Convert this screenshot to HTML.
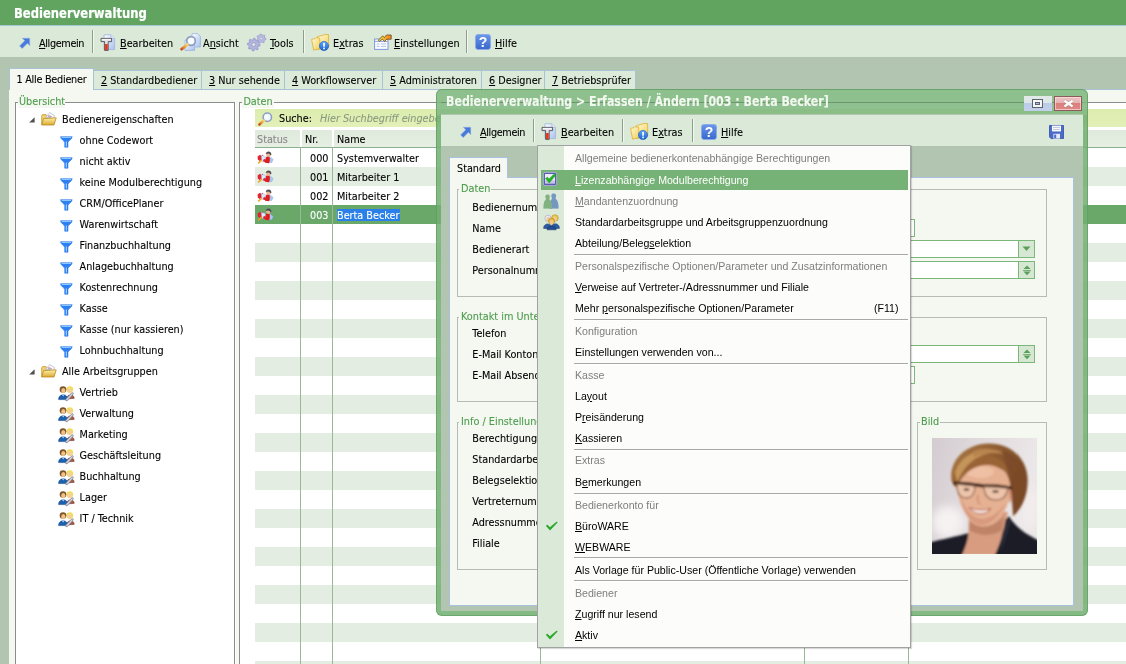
<!DOCTYPE html>
<html lang="de"><head><meta charset="utf-8"><title>Bedienerverwaltung</title>
<style>
html,body{margin:0;padding:0}
body{width:1126px;height:664px;overflow:hidden;position:relative;background:#f4f8f0;font-family:'DejaVu Sans Condensed','Liberation Sans',sans-serif;font-size:10.75px;color:#000}
#root{left:0;top:0;width:1126px;height:664px;overflow:hidden;will-change:transform}
div{position:absolute;box-sizing:border-box;white-space:nowrap}
svg{position:absolute;overflow:visible}
.t{line-height:14px;height:14px;-webkit-text-stroke:0.1px currentColor}
.g{color:#4c9c4c}
.m{font-family:'Liberation Sans',sans-serif;font-size:11.5px;line-height:14px;height:14px;transform:scaleX(.922);transform-origin:0 0}
.mg{color:#7e7e7e}
u{text-decoration:underline;text-underline-offset:1px}
.bold{font-weight:bold}
</style></head>
<body>
<div id="root">
<svg width="0" height="0" style="left:0;top:0"><defs><linearGradient id="gFold" x1="0" y1="0" x2="0" y2="1"><stop offset="0" stop-color="#fdf0a8"/><stop offset="1" stop-color="#dcaa34"/></linearGradient><linearGradient id="gFold2" x1="0" y1="0" x2="1" y2="1"><stop offset="0" stop-color="#fff8d4"/><stop offset="1" stop-color="#f2d058"/></linearGradient><linearGradient id="gHandle" x1="1" y1="0" x2="0" y2="1"><stop offset="0" stop-color="#f8d860"/><stop offset="0.6" stop-color="#e89030"/><stop offset="1" stop-color="#c05028"/></linearGradient><linearGradient id="gDoc" x1="0" y1="0" x2="1" y2="1"><stop offset="0" stop-color="#ffffff"/><stop offset="1" stop-color="#a8c0f0"/></linearGradient><linearGradient id="gHelp" x1="0" y1="0" x2="0" y2="1"><stop offset="0" stop-color="#6a96ea"/><stop offset="1" stop-color="#3868cc"/></linearGradient><linearGradient id="gBlue" x1="0" y1="0" x2="0" y2="1"><stop offset="0" stop-color="#58a8ff"/><stop offset="1" stop-color="#1c60d0"/></linearGradient><linearGradient id="gOr" x1="0" y1="0" x2="1" y2="0"><stop offset="0" stop-color="#f8e040"/><stop offset="1" stop-color="#f08020"/></linearGradient></defs></svg>
<div style="left:0px;top:0px;width:1126px;height:25px;background:#60a460"></div>
<div class="t" style="left:14px;top:4.6px;font-weight:bold;font-size:14.3px;transform:scaleX(.902);transform-origin:0 0;color:#fff;line-height:16px;height:16px;text-shadow:0 0 1px rgba(255,255,255,.35)">Bedienerverwaltung</div>
<div style="left:0px;top:25px;width:1126px;height:32px;background:#dbead8"></div>
<div style="left:0px;top:25px;width:1126px;height:1px;background:#a4c8d4"></div>
<div style="left:0px;top:57px;width:1126px;height:33px;background:#b1c5b1"></div>
<div style="left:0px;top:89px;width:9px;height:575px;background:#b1c5b1"></div>
<svg style="left:19px;top:37.4px" width="12" height="12" viewBox="0 0 12 12"><path d="M3.4 1.3 L10.7 1.3 L10.7 8.6 L8.4 6.3 L3.2 11.5 L0.6 8.9 L5.8 3.7 Z" fill="#4878d8" stroke="#88a8ec" stroke-width="0.6"/></svg>
<div class="t" style="left:39px;top:37px;letter-spacing:-0.35px"><u>A</u>llgemein</div>
<div style="left:92px;top:30px;width:1px;height:23px;background:#8e9e8e"></div>
<div style="left:93px;top:30px;width:1px;height:23px;background:#f2f8f0"></div>
<svg style="left:100px;top:34px" width="16" height="18" viewBox="0 0 16 18"><path d="M4 0.8 H11 L14.6 4.4 V15.6 H4 Z" fill="url(#gDoc)" stroke="#a4b8dc" stroke-width="0.9"/><path d="M11 0.8 V4.4 H14.6" fill="#e4ecfa" stroke="#a4b8dc" stroke-width="0.7"/><path d="M1 4.4 H11.6 V7.6 H8.2 V16.4 H4.6 V7.6 H1 Z" fill="#e4e4e8" stroke="#4c4c54" stroke-width="0.9"/><path d="M2 5.4 H10.6" stroke="#fff" stroke-width="0.8"/><rect x="5.1" y="10" width="2.6" height="6" fill="#e83410"/></svg>
<div class="t" style="left:120px;top:37px;"><u>B</u>earbeiten</div>
<svg style="left:180.2px;top:33px" width="21" height="18" viewBox="0 0 21 18"><path d="M12 0.6 H17.6 L20.4 3.4 V14 H12 Z" fill="url(#gDoc)" stroke="#9cb4e0" stroke-width="0.8"/><path d="M5 7 H12.4 L14.6 9.2 V17.4 H5 Z" fill="url(#gDoc)" stroke="#9cb4e0" stroke-width="0.8"/><path d="M14.5 5h4M14.5 7.2h4M14.5 9.4h4" stroke="#c8d8f4" stroke-width="0.8"/><circle cx="11" cy="8" r="4.3" fill="#fafdff" stroke="#8c9cc0" stroke-width="1.7"/><path d="M7.4 11.6 L1.6 16.2" stroke="url(#gHandle)" stroke-width="2.8" stroke-linecap="round"/></svg>
<div class="t" style="left:203px;top:37px;">A<u>n</u>sicht</div>
<svg style="left:247px;top:33.6px" width="20" height="18" viewBox="0 0 20 18"><polygon points="13.10,10.60 12.98,11.85 11.08,12.41 10.64,13.23 11.23,15.13 10.26,15.92 8.51,14.98 7.62,15.24 6.70,17.00 5.45,16.88 4.89,14.98 4.07,14.54 2.17,15.13 1.38,14.16 2.32,12.41 2.06,11.52 0.30,10.60 0.42,9.35 2.32,8.79 2.76,7.97 2.17,6.07 3.14,5.28 4.89,6.22 5.78,5.96 6.70,4.20 7.95,4.32 8.51,6.22 9.33,6.66 11.23,6.07 12.02,7.04 11.08,8.79 11.34,9.68" fill="#b4b4e0" stroke="#8c8cc4" stroke-width="0.7" stroke-linejoin="round"/><circle cx="6.7" cy="10.6" r="1.92" fill="#dcead9" stroke="#8c8cc4" stroke-width="0.6"/><polygon points="19.00,4.60 18.88,5.65 17.43,6.11 17.02,6.77 17.23,8.27 16.34,8.83 15.07,7.99 14.30,8.08 13.25,9.18 12.26,8.83 12.13,7.32 11.58,6.77 10.07,6.64 9.72,5.65 10.82,4.60 10.91,3.83 10.07,2.56 10.63,1.67 12.13,1.88 12.79,1.47 13.25,0.02 14.30,-0.10 15.07,1.21 15.81,1.47 17.23,0.93 17.97,1.67 17.43,3.09 17.69,3.83" fill="#bcbce4" stroke="#9494cc" stroke-width="0.7" stroke-linejoin="round"/><circle cx="14.3" cy="4.6" r="1.41" fill="#dcead9" stroke="#9494cc" stroke-width="0.6"/></svg>
<div class="t" style="left:270px;top:37px;"><u>T</u>ools</div>
<div style="left:303px;top:30px;width:1px;height:23px;background:#8e9e8e"></div>
<div style="left:304px;top:30px;width:1px;height:23px;background:#f2f8f0"></div>
<svg style="left:310.8px;top:33.6px" width="19" height="17" viewBox="0 0 19 17"><path d="M6.4 2.6 L12.2 1.2 L13 0.4 L17.6 0.6 L17.8 13 L7 15.4 Z" fill="url(#gFold2)" stroke="#dcae34" stroke-width="0.8" stroke-linejoin="round"/><path d="M0.6 5.4 L4 4.6 L4.8 3.8 L8.6 4 L9.2 14.6 L2.6 16.2 Z" fill="url(#gFold2)" stroke="#dcae34" stroke-width="0.8" stroke-linejoin="round"/><circle cx="13" cy="12" r="4.6" fill="url(#gBlue)" stroke="#1858c0" stroke-width="0.6"/><rect x="12.2" y="8.8" width="1.7" height="4" rx="0.5" fill="#fff"/><rect x="12.2" y="13.6" width="1.7" height="1.6" rx="0.5" fill="#fff"/></svg>
<div class="t" style="left:333px;top:37px;">E<u>x</u>tras</div>
<svg style="left:373.8px;top:33.8px" width="18" height="17" viewBox="0 0 18 17"><rect x="0.6" y="5" width="13.4" height="10.4" fill="#fbfcff" stroke="#7c98dc" stroke-width="1"/><path d="M0.6 7.4 H14" stroke="#88a4e4" stroke-width="1"/><path d="M2.6 10h3M7 10h5M2.6 12.4h3M7 12.4h5" stroke="#b0c0e8" stroke-width="1"/><path d="M4.4 6.2 L8.6 1.8 L10.4 3.6 L12.4 1 L17.2 1 L17.2 5.2 L12.6 5.2 L10.6 7.6 L8.4 5.2 L5.4 7.4 Z" fill="url(#gOr)" stroke="#5c3c10" stroke-width="0.7" stroke-linejoin="round"/></svg>
<div class="t" style="left:394px;top:37px;"><u>E</u>instellungen</div>
<div style="left:466px;top:30px;width:1px;height:23px;background:#8e9e8e"></div>
<div style="left:467px;top:30px;width:1px;height:23px;background:#f2f8f0"></div>
<svg style="left:474.6px;top:34.4px" width="16" height="16" viewBox="0 0 16 16"><rect x="0.5" y="0.5" width="15" height="15" rx="2.4" fill="url(#gHelp)" stroke="#8caaea" stroke-width="1"/><text x="8" y="13" text-anchor="middle" font-family="Liberation Sans,sans-serif" font-weight="bold" font-size="14" fill="#fff">?</text></svg>
<div class="t" style="left:495px;top:37px;"><u>H</u>ilfe</div>
<div style="left:93px;top:70px;width:109px;height:19px;background:#dcebd9;border:1px solid #a9c3d6;border-bottom:none"></div>
<div class="t" style="left:101px;top:74px;"><u>2</u> Standardbediener</div>
<div style="left:201px;top:70px;width:84px;height:19px;background:#dcebd9;border:1px solid #a9c3d6;border-bottom:none"></div>
<div class="t" style="left:209px;top:74px;"><u>3</u> Nur sehende</div>
<div style="left:284px;top:70px;width:99px;height:19px;background:#dcebd9;border:1px solid #a9c3d6;border-bottom:none"></div>
<div class="t" style="left:292px;top:74px;"><u>4</u> Workflowserver</div>
<div style="left:382px;top:70px;width:100px;height:19px;background:#dcebd9;border:1px solid #a9c3d6;border-bottom:none"></div>
<div class="t" style="left:390px;top:74px;"><u>5</u> Administratoren</div>
<div style="left:481px;top:70px;width:64px;height:19px;background:#dcebd9;border:1px solid #a9c3d6;border-bottom:none"></div>
<div class="t" style="left:489px;top:74px;"><u>6</u> Designer</div>
<div style="left:544px;top:70px;width:92px;height:19px;background:#dcebd9;border:1px solid #a9c3d6;border-bottom:none"></div>
<div class="t" style="left:552px;top:74px;"><u>7</u> Betriebsprüfer</div>
<div style="left:9px;top:89px;width:1117px;height:1px;background:#a9c3d6"></div>
<div style="left:9px;top:68px;width:85px;height:22px;background:#f4f8f0;border:1px solid #a9c3d6;border-bottom:none"></div>
<div class="t" style="left:16.5px;top:73px;letter-spacing:-0.25px">1 Alle Bediener</div>
<div style="left:15px;top:102px;width:220px;height:570px;border:1px solid #8c8c8c;background:#fff;box-shadow:1px 0 0 #fff, inset 1px 1px 0 #fff"></div>
<div style="left:18px;top:94px;width:47px;height:14px;background:#f4f8f0"></div>
<div class="t" style="left:19px;top:95px;color:#4c9c4c;font-size:10.75px">Übersicht</div>
<svg style="left:29.4px;top:117.2px" width="6" height="6" viewBox="0 0 6 6"><path d="M5.6 0.2 V5.6 H0.2 Z" fill="#505050"/></svg>
<svg style="left:40.6px;top:111.6px" width="16" height="14" viewBox="0 0 16 14"><path d="M0.7 12.8 V3.6 L1.8 2.6 H5 L6 3.8 H11.6 V6" fill="#f0d070" stroke="#c09828" stroke-width="0.8"/><path d="M4.6 5.4 L8.6 0.6 L13.6 3.6 L12.4 6.4 Z" fill="#fbfcff" stroke="#a8b0c8" stroke-width="0.7"/><path d="M7.4 3.4 L10.8 4.8" stroke="#d06070" stroke-width="0.8"/><path d="M6.8 4.4 L9.6 5.4" stroke="#7090d0" stroke-width="0.8"/><path d="M0.7 13 L2.6 6.6 L15.2 5.8 L13 13 Z" fill="url(#gFold)" stroke="#b88c20" stroke-width="0.8" stroke-linejoin="round"/></svg>
<div class="t" style="left:62px;top:113px;">Bedienereigenschaften</div>
<svg style="left:59.7px;top:135.6px" width="13" height="12" viewBox="0 0 13 12"><path d="M0.5 0.7 H12.2 C12 3.4 8.4 4.6 8 6.4 V11.2 H4.7 V6.4 C4.3 4.6 0.7 3.4 0.5 0.7Z" fill="#2c80f4" stroke="#1c6ce8" stroke-width="0.5" stroke-linejoin="round"/><path d="M1.6 1.5 H11.1" stroke="#8cc8ff" stroke-width="1"/><path d="M6.35 5.5 V10.6" stroke="#a4d4ff" stroke-width="1.1"/></svg>
<div class="t" style="left:79.6px;top:134px;">ohne Codewort</div>
<svg style="left:59.7px;top:156.6px" width="13" height="12" viewBox="0 0 13 12"><path d="M0.5 0.7 H12.2 C12 3.4 8.4 4.6 8 6.4 V11.2 H4.7 V6.4 C4.3 4.6 0.7 3.4 0.5 0.7Z" fill="#2c80f4" stroke="#1c6ce8" stroke-width="0.5" stroke-linejoin="round"/><path d="M1.6 1.5 H11.1" stroke="#8cc8ff" stroke-width="1"/><path d="M6.35 5.5 V10.6" stroke="#a4d4ff" stroke-width="1.1"/></svg>
<div class="t" style="left:79.6px;top:155px;">nicht aktiv</div>
<svg style="left:59.7px;top:177.6px" width="13" height="12" viewBox="0 0 13 12"><path d="M0.5 0.7 H12.2 C12 3.4 8.4 4.6 8 6.4 V11.2 H4.7 V6.4 C4.3 4.6 0.7 3.4 0.5 0.7Z" fill="#2c80f4" stroke="#1c6ce8" stroke-width="0.5" stroke-linejoin="round"/><path d="M1.6 1.5 H11.1" stroke="#8cc8ff" stroke-width="1"/><path d="M6.35 5.5 V10.6" stroke="#a4d4ff" stroke-width="1.1"/></svg>
<div class="t" style="left:79.6px;top:176px;">keine Modulberechtigung</div>
<svg style="left:59.7px;top:198.6px" width="13" height="12" viewBox="0 0 13 12"><path d="M0.5 0.7 H12.2 C12 3.4 8.4 4.6 8 6.4 V11.2 H4.7 V6.4 C4.3 4.6 0.7 3.4 0.5 0.7Z" fill="#2c80f4" stroke="#1c6ce8" stroke-width="0.5" stroke-linejoin="round"/><path d="M1.6 1.5 H11.1" stroke="#8cc8ff" stroke-width="1"/><path d="M6.35 5.5 V10.6" stroke="#a4d4ff" stroke-width="1.1"/></svg>
<div class="t" style="left:79.6px;top:197px;">CRM/OfficePlaner</div>
<svg style="left:59.7px;top:219.6px" width="13" height="12" viewBox="0 0 13 12"><path d="M0.5 0.7 H12.2 C12 3.4 8.4 4.6 8 6.4 V11.2 H4.7 V6.4 C4.3 4.6 0.7 3.4 0.5 0.7Z" fill="#2c80f4" stroke="#1c6ce8" stroke-width="0.5" stroke-linejoin="round"/><path d="M1.6 1.5 H11.1" stroke="#8cc8ff" stroke-width="1"/><path d="M6.35 5.5 V10.6" stroke="#a4d4ff" stroke-width="1.1"/></svg>
<div class="t" style="left:79.6px;top:218px;">Warenwirtschaft</div>
<svg style="left:59.7px;top:240.6px" width="13" height="12" viewBox="0 0 13 12"><path d="M0.5 0.7 H12.2 C12 3.4 8.4 4.6 8 6.4 V11.2 H4.7 V6.4 C4.3 4.6 0.7 3.4 0.5 0.7Z" fill="#2c80f4" stroke="#1c6ce8" stroke-width="0.5" stroke-linejoin="round"/><path d="M1.6 1.5 H11.1" stroke="#8cc8ff" stroke-width="1"/><path d="M6.35 5.5 V10.6" stroke="#a4d4ff" stroke-width="1.1"/></svg>
<div class="t" style="left:79.6px;top:239px;">Finanzbuchhaltung</div>
<svg style="left:59.7px;top:261.6px" width="13" height="12" viewBox="0 0 13 12"><path d="M0.5 0.7 H12.2 C12 3.4 8.4 4.6 8 6.4 V11.2 H4.7 V6.4 C4.3 4.6 0.7 3.4 0.5 0.7Z" fill="#2c80f4" stroke="#1c6ce8" stroke-width="0.5" stroke-linejoin="round"/><path d="M1.6 1.5 H11.1" stroke="#8cc8ff" stroke-width="1"/><path d="M6.35 5.5 V10.6" stroke="#a4d4ff" stroke-width="1.1"/></svg>
<div class="t" style="left:79.6px;top:260px;">Anlagebuchhaltung</div>
<svg style="left:59.7px;top:282.6px" width="13" height="12" viewBox="0 0 13 12"><path d="M0.5 0.7 H12.2 C12 3.4 8.4 4.6 8 6.4 V11.2 H4.7 V6.4 C4.3 4.6 0.7 3.4 0.5 0.7Z" fill="#2c80f4" stroke="#1c6ce8" stroke-width="0.5" stroke-linejoin="round"/><path d="M1.6 1.5 H11.1" stroke="#8cc8ff" stroke-width="1"/><path d="M6.35 5.5 V10.6" stroke="#a4d4ff" stroke-width="1.1"/></svg>
<div class="t" style="left:79.6px;top:281px;">Kostenrechnung</div>
<svg style="left:59.7px;top:303.6px" width="13" height="12" viewBox="0 0 13 12"><path d="M0.5 0.7 H12.2 C12 3.4 8.4 4.6 8 6.4 V11.2 H4.7 V6.4 C4.3 4.6 0.7 3.4 0.5 0.7Z" fill="#2c80f4" stroke="#1c6ce8" stroke-width="0.5" stroke-linejoin="round"/><path d="M1.6 1.5 H11.1" stroke="#8cc8ff" stroke-width="1"/><path d="M6.35 5.5 V10.6" stroke="#a4d4ff" stroke-width="1.1"/></svg>
<div class="t" style="left:79.6px;top:302px;">Kasse</div>
<svg style="left:59.7px;top:324.6px" width="13" height="12" viewBox="0 0 13 12"><path d="M0.5 0.7 H12.2 C12 3.4 8.4 4.6 8 6.4 V11.2 H4.7 V6.4 C4.3 4.6 0.7 3.4 0.5 0.7Z" fill="#2c80f4" stroke="#1c6ce8" stroke-width="0.5" stroke-linejoin="round"/><path d="M1.6 1.5 H11.1" stroke="#8cc8ff" stroke-width="1"/><path d="M6.35 5.5 V10.6" stroke="#a4d4ff" stroke-width="1.1"/></svg>
<div class="t" style="left:79.6px;top:323px;">Kasse (nur kassieren)</div>
<svg style="left:59.7px;top:345.6px" width="13" height="12" viewBox="0 0 13 12"><path d="M0.5 0.7 H12.2 C12 3.4 8.4 4.6 8 6.4 V11.2 H4.7 V6.4 C4.3 4.6 0.7 3.4 0.5 0.7Z" fill="#2c80f4" stroke="#1c6ce8" stroke-width="0.5" stroke-linejoin="round"/><path d="M1.6 1.5 H11.1" stroke="#8cc8ff" stroke-width="1"/><path d="M6.35 5.5 V10.6" stroke="#a4d4ff" stroke-width="1.1"/></svg>
<div class="t" style="left:79.6px;top:344px;">Lohnbuchhaltung</div>
<svg style="left:29.4px;top:369.2px" width="6" height="6" viewBox="0 0 6 6"><path d="M5.6 0.2 V5.6 H0.2 Z" fill="#505050"/></svg>
<svg style="left:40.6px;top:363.6px" width="16" height="14" viewBox="0 0 16 14"><path d="M0.7 12.8 V3.6 L1.8 2.6 H5 L6 3.8 H11.6 V6" fill="#f0d070" stroke="#c09828" stroke-width="0.8"/><path d="M4.6 5.4 L8.6 0.6 L13.6 3.6 L12.4 6.4 Z" fill="#fbfcff" stroke="#a8b0c8" stroke-width="0.7"/><path d="M7.4 3.4 L10.8 4.8" stroke="#d06070" stroke-width="0.8"/><path d="M6.8 4.4 L9.6 5.4" stroke="#7090d0" stroke-width="0.8"/><path d="M0.7 13 L2.6 6.6 L15.2 5.8 L13 13 Z" fill="url(#gFold)" stroke="#b88c20" stroke-width="0.8" stroke-linejoin="round"/></svg>
<div class="t" style="left:62px;top:365px;">Alle Arbeitsgruppen</div>
<svg style="left:57.6px;top:385.4px" width="17" height="16" viewBox="0 0 17 16"><path d="M8.6 14 C8.4 8.6 16.4 8.6 16.2 13.4 Z" fill="#a45848" stroke="#70382c" stroke-width="0.5"/><circle cx="11.8" cy="4.6" r="3.3" fill="#f4dc58"/><ellipse cx="11.6" cy="5.4" rx="2" ry="2.5" fill="#f4d0a0"/><path d="M0.6 14.6 C0.2 8.2 10 8.2 9.8 14.6 Z" fill="#1c60b0" stroke="#0c3c80" stroke-width="0.5"/><path d="M3.6 9.4 L5.2 11.6 L6.8 9.4Z" fill="#a8d0f8"/><circle cx="5" cy="4.6" r="3.3" fill="#7c5428"/><ellipse cx="5.3" cy="5.6" rx="2.1" ry="2.6" fill="#f0c088"/><path d="M8.6 14.8 L14.4 8.6" stroke="#8c8c98" stroke-width="2.6" stroke-linecap="round"/><path d="M8.8 14.6 L14.2 8.8" stroke="#dcdce4" stroke-width="1.2" stroke-linecap="round"/></svg>
<div class="t" style="left:79.6px;top:386px;">Vertrieb</div>
<svg style="left:57.6px;top:406.4px" width="17" height="16" viewBox="0 0 17 16"><path d="M8.6 14 C8.4 8.6 16.4 8.6 16.2 13.4 Z" fill="#a45848" stroke="#70382c" stroke-width="0.5"/><circle cx="11.8" cy="4.6" r="3.3" fill="#f4dc58"/><ellipse cx="11.6" cy="5.4" rx="2" ry="2.5" fill="#f4d0a0"/><path d="M0.6 14.6 C0.2 8.2 10 8.2 9.8 14.6 Z" fill="#1c60b0" stroke="#0c3c80" stroke-width="0.5"/><path d="M3.6 9.4 L5.2 11.6 L6.8 9.4Z" fill="#a8d0f8"/><circle cx="5" cy="4.6" r="3.3" fill="#7c5428"/><ellipse cx="5.3" cy="5.6" rx="2.1" ry="2.6" fill="#f0c088"/><path d="M8.6 14.8 L14.4 8.6" stroke="#8c8c98" stroke-width="2.6" stroke-linecap="round"/><path d="M8.8 14.6 L14.2 8.8" stroke="#dcdce4" stroke-width="1.2" stroke-linecap="round"/></svg>
<div class="t" style="left:79.6px;top:407px;">Verwaltung</div>
<svg style="left:57.6px;top:427.4px" width="17" height="16" viewBox="0 0 17 16"><path d="M8.6 14 C8.4 8.6 16.4 8.6 16.2 13.4 Z" fill="#a45848" stroke="#70382c" stroke-width="0.5"/><circle cx="11.8" cy="4.6" r="3.3" fill="#f4dc58"/><ellipse cx="11.6" cy="5.4" rx="2" ry="2.5" fill="#f4d0a0"/><path d="M0.6 14.6 C0.2 8.2 10 8.2 9.8 14.6 Z" fill="#1c60b0" stroke="#0c3c80" stroke-width="0.5"/><path d="M3.6 9.4 L5.2 11.6 L6.8 9.4Z" fill="#a8d0f8"/><circle cx="5" cy="4.6" r="3.3" fill="#7c5428"/><ellipse cx="5.3" cy="5.6" rx="2.1" ry="2.6" fill="#f0c088"/><path d="M8.6 14.8 L14.4 8.6" stroke="#8c8c98" stroke-width="2.6" stroke-linecap="round"/><path d="M8.8 14.6 L14.2 8.8" stroke="#dcdce4" stroke-width="1.2" stroke-linecap="round"/></svg>
<div class="t" style="left:79.6px;top:428px;">Marketing</div>
<svg style="left:57.6px;top:448.4px" width="17" height="16" viewBox="0 0 17 16"><path d="M8.6 14 C8.4 8.6 16.4 8.6 16.2 13.4 Z" fill="#a45848" stroke="#70382c" stroke-width="0.5"/><circle cx="11.8" cy="4.6" r="3.3" fill="#f4dc58"/><ellipse cx="11.6" cy="5.4" rx="2" ry="2.5" fill="#f4d0a0"/><path d="M0.6 14.6 C0.2 8.2 10 8.2 9.8 14.6 Z" fill="#1c60b0" stroke="#0c3c80" stroke-width="0.5"/><path d="M3.6 9.4 L5.2 11.6 L6.8 9.4Z" fill="#a8d0f8"/><circle cx="5" cy="4.6" r="3.3" fill="#7c5428"/><ellipse cx="5.3" cy="5.6" rx="2.1" ry="2.6" fill="#f0c088"/><path d="M8.6 14.8 L14.4 8.6" stroke="#8c8c98" stroke-width="2.6" stroke-linecap="round"/><path d="M8.8 14.6 L14.2 8.8" stroke="#dcdce4" stroke-width="1.2" stroke-linecap="round"/></svg>
<div class="t" style="left:79.6px;top:449px;">Geschäftsleitung</div>
<svg style="left:57.6px;top:469.4px" width="17" height="16" viewBox="0 0 17 16"><path d="M8.6 14 C8.4 8.6 16.4 8.6 16.2 13.4 Z" fill="#a45848" stroke="#70382c" stroke-width="0.5"/><circle cx="11.8" cy="4.6" r="3.3" fill="#f4dc58"/><ellipse cx="11.6" cy="5.4" rx="2" ry="2.5" fill="#f4d0a0"/><path d="M0.6 14.6 C0.2 8.2 10 8.2 9.8 14.6 Z" fill="#1c60b0" stroke="#0c3c80" stroke-width="0.5"/><path d="M3.6 9.4 L5.2 11.6 L6.8 9.4Z" fill="#a8d0f8"/><circle cx="5" cy="4.6" r="3.3" fill="#7c5428"/><ellipse cx="5.3" cy="5.6" rx="2.1" ry="2.6" fill="#f0c088"/><path d="M8.6 14.8 L14.4 8.6" stroke="#8c8c98" stroke-width="2.6" stroke-linecap="round"/><path d="M8.8 14.6 L14.2 8.8" stroke="#dcdce4" stroke-width="1.2" stroke-linecap="round"/></svg>
<div class="t" style="left:79.6px;top:470px;">Buchhaltung</div>
<svg style="left:57.6px;top:490.4px" width="17" height="16" viewBox="0 0 17 16"><path d="M8.6 14 C8.4 8.6 16.4 8.6 16.2 13.4 Z" fill="#a45848" stroke="#70382c" stroke-width="0.5"/><circle cx="11.8" cy="4.6" r="3.3" fill="#f4dc58"/><ellipse cx="11.6" cy="5.4" rx="2" ry="2.5" fill="#f4d0a0"/><path d="M0.6 14.6 C0.2 8.2 10 8.2 9.8 14.6 Z" fill="#1c60b0" stroke="#0c3c80" stroke-width="0.5"/><path d="M3.6 9.4 L5.2 11.6 L6.8 9.4Z" fill="#a8d0f8"/><circle cx="5" cy="4.6" r="3.3" fill="#7c5428"/><ellipse cx="5.3" cy="5.6" rx="2.1" ry="2.6" fill="#f0c088"/><path d="M8.6 14.8 L14.4 8.6" stroke="#8c8c98" stroke-width="2.6" stroke-linecap="round"/><path d="M8.8 14.6 L14.2 8.8" stroke="#dcdce4" stroke-width="1.2" stroke-linecap="round"/></svg>
<div class="t" style="left:79.6px;top:491px;">Lager</div>
<svg style="left:57.6px;top:511.4px" width="17" height="16" viewBox="0 0 17 16"><path d="M8.6 14 C8.4 8.6 16.4 8.6 16.2 13.4 Z" fill="#a45848" stroke="#70382c" stroke-width="0.5"/><circle cx="11.8" cy="4.6" r="3.3" fill="#f4dc58"/><ellipse cx="11.6" cy="5.4" rx="2" ry="2.5" fill="#f4d0a0"/><path d="M0.6 14.6 C0.2 8.2 10 8.2 9.8 14.6 Z" fill="#1c60b0" stroke="#0c3c80" stroke-width="0.5"/><path d="M3.6 9.4 L5.2 11.6 L6.8 9.4Z" fill="#a8d0f8"/><circle cx="5" cy="4.6" r="3.3" fill="#7c5428"/><ellipse cx="5.3" cy="5.6" rx="2.1" ry="2.6" fill="#f0c088"/><path d="M8.6 14.8 L14.4 8.6" stroke="#8c8c98" stroke-width="2.6" stroke-linecap="round"/><path d="M8.8 14.6 L14.2 8.8" stroke="#dcdce4" stroke-width="1.2" stroke-linecap="round"/></svg>
<div class="t" style="left:79.6px;top:512px;">IT / Technik</div>
<div style="left:239px;top:102px;width:900px;height:570px;border:1px solid #8c8c8c;background:#fff"></div>
<div style="left:242px;top:94px;width:32px;height:14px;background:#f4f8f0"></div>
<div class="t" style="left:243.4px;top:95px;color:#4c9c4c;font-size:10.75px">Daten</div>
<div style="left:255px;top:109.3px;width:880px;height:18px;background:linear-gradient(#dcecae,#e3f0b8)"></div>
<svg style="left:257.6px;top:111.6px" width="15" height="14" viewBox="0 0 15 14"><circle cx="9.3" cy="5.2" r="4.2" fill="#eef8ff" stroke="#90a0c4" stroke-width="1.6"/><circle cx="8.4" cy="4.4" r="1.6" fill="#ffffff"/><path d="M5.8 8.6 L1.4 12.4" stroke="url(#gHandle)" stroke-width="2.6" stroke-linecap="round"/></svg>
<div class="t" style="left:279px;top:112px;">Suche:</div>
<div class="t" style="left:320px;top:112px;font-style:italic;color:#8a9a80">Hier Suchbegriff eingeben</div>
<div style="left:255px;top:130px;width:880px;height:17px;background:linear-gradient(#dfeadc,#e5eee2)"></div>
<div style="left:255px;top:147px;width:880px;height:1px;background:#8cb08c"></div>
<div class="t" style="left:257px;top:133px;color:#8a8a8a">Status</div>
<div class="t" style="left:305px;top:133px;">Nr.</div>
<div class="t" style="left:337px;top:133px;">Name</div>
<div style="left:255px;top:148px;width:880px;height:19px;background:#fff"></div>
<svg style="left:256.6px;top:151px" width="17" height="13" viewBox="0 0 17 13"><path d="M12.6 5.4 L16.2 8.4 L14.8 11.6 L11 11.8 Z" fill="#a4c8f4" stroke="#88a8dc" stroke-width="0.4"/><path d="M8 11.8 C7.6 6.4 9.6 4.8 12 5.2 C13.4 7 13 10 12 12.2 Z" fill="#e01c1c"/><circle cx="11.4" cy="3.6" r="2.3" fill="#ecb494"/><path d="M8.8 3 C8.8 -0.4 14.6 -0.4 14.4 3.8 L13.4 4.6 C13.2 2.6 11.4 1.8 8.8 3Z" fill="#4c4c54"/><path d="M0.6 5.6 L3 3.8 L4.4 5 L6 3.6 L6.4 6.4 L5 8.6 L2.6 10 L0.8 8.6 Z" fill="#e42430"/><path d="M4.4 4.4 L8.2 5.4 L8.4 9.4 L5.4 10.6 L4.6 8Z" fill="#dcecfc" stroke="#90b0e0" stroke-width="0.5"/><circle cx="7.6" cy="9.6" r="1.5" fill="#e42430"/><path d="M1.6 12 L4.2 9.6" stroke="#f0a020" stroke-width="1.5" stroke-linecap="round"/></svg>
<div class="t" style="left:310px;top:152px;color:#000">000</div>
<div class="t" style="left:337px;top:152px;color:#000">Systemverwalter</div>
<div style="left:255px;top:167px;width:880px;height:19px;background:#e3ede1"></div>
<svg style="left:256.6px;top:170px" width="17" height="13" viewBox="0 0 17 13"><path d="M12.6 5.4 L16.2 8.4 L14.8 11.6 L11 11.8 Z" fill="#a4c8f4" stroke="#88a8dc" stroke-width="0.4"/><path d="M8 11.8 C7.6 6.4 9.6 4.8 12 5.2 C13.4 7 13 10 12 12.2 Z" fill="#e01c1c"/><circle cx="11.4" cy="3.6" r="2.3" fill="#ecb494"/><path d="M8.8 3 C8.8 -0.4 14.6 -0.4 14.4 3.8 L13.4 4.6 C13.2 2.6 11.4 1.8 8.8 3Z" fill="#4c4c54"/><path d="M0.6 5.6 L3 3.8 L4.4 5 L6 3.6 L6.4 6.4 L5 8.6 L2.6 10 L0.8 8.6 Z" fill="#e42430"/><path d="M4.4 4.4 L8.2 5.4 L8.4 9.4 L5.4 10.6 L4.6 8Z" fill="#dcecfc" stroke="#90b0e0" stroke-width="0.5"/><circle cx="7.6" cy="9.6" r="1.5" fill="#e42430"/><path d="M1.6 12 L4.2 9.6" stroke="#f0a020" stroke-width="1.5" stroke-linecap="round"/></svg>
<div class="t" style="left:310px;top:171px;color:#000">001</div>
<div class="t" style="left:337px;top:171px;color:#000">Mitarbeiter 1</div>
<div style="left:255px;top:186px;width:880px;height:19px;background:#fff"></div>
<svg style="left:256.6px;top:189px" width="17" height="13" viewBox="0 0 17 13"><path d="M12.6 5.4 L16.2 8.4 L14.8 11.6 L11 11.8 Z" fill="#a4c8f4" stroke="#88a8dc" stroke-width="0.4"/><path d="M8 11.8 C7.6 6.4 9.6 4.8 12 5.2 C13.4 7 13 10 12 12.2 Z" fill="#e01c1c"/><circle cx="11.4" cy="3.6" r="2.3" fill="#ecb494"/><path d="M8.8 3 C8.8 -0.4 14.6 -0.4 14.4 3.8 L13.4 4.6 C13.2 2.6 11.4 1.8 8.8 3Z" fill="#4c4c54"/><path d="M0.6 5.6 L3 3.8 L4.4 5 L6 3.6 L6.4 6.4 L5 8.6 L2.6 10 L0.8 8.6 Z" fill="#e42430"/><path d="M4.4 4.4 L8.2 5.4 L8.4 9.4 L5.4 10.6 L4.6 8Z" fill="#dcecfc" stroke="#90b0e0" stroke-width="0.5"/><circle cx="7.6" cy="9.6" r="1.5" fill="#e42430"/><path d="M1.6 12 L4.2 9.6" stroke="#f0a020" stroke-width="1.5" stroke-linecap="round"/></svg>
<div class="t" style="left:310px;top:190px;color:#000">002</div>
<div class="t" style="left:337px;top:190px;color:#000">Mitarbeiter 2</div>
<div style="left:255px;top:205px;width:880px;height:19px;background:#6aa86a"></div>
<svg style="left:256.6px;top:208px" width="17" height="13" viewBox="0 0 17 13"><path d="M12.6 5.4 L16.2 8.4 L14.8 11.6 L11 11.8 Z" fill="#a4c8f4" stroke="#88a8dc" stroke-width="0.4"/><path d="M8 11.8 C7.6 6.4 9.6 4.8 12 5.2 C13.4 7 13 10 12 12.2 Z" fill="#e01c1c"/><circle cx="11.4" cy="3.6" r="2.3" fill="#ecb494"/><path d="M8.8 3 C8.8 -0.4 14.6 -0.4 14.4 3.8 L13.4 4.6 C13.2 2.6 11.4 1.8 8.8 3Z" fill="#4c4c54"/><path d="M0.6 5.6 L3 3.8 L4.4 5 L6 3.6 L6.4 6.4 L5 8.6 L2.6 10 L0.8 8.6 Z" fill="#e42430"/><path d="M4.4 4.4 L8.2 5.4 L8.4 9.4 L5.4 10.6 L4.6 8Z" fill="#dcecfc" stroke="#90b0e0" stroke-width="0.5"/><circle cx="7.6" cy="9.6" r="1.5" fill="#e42430"/><path d="M1.6 12 L4.2 9.6" stroke="#f0a020" stroke-width="1.5" stroke-linecap="round"/></svg>
<div class="t" style="left:310px;top:209px;color:#fff">003</div>
<div style="left:337px;top:208.7px;width:63px;height:12.3px;background:#2a80e8"></div>
<div class="t" style="left:337px;top:209px;color:#fff">Berta Becker</div>
<div style="left:255px;top:224px;width:880px;height:19px;background:#fff"></div>
<div style="left:255px;top:243px;width:880px;height:19px;background:#e3ede1"></div>
<div style="left:255px;top:262px;width:880px;height:19px;background:#fff"></div>
<div style="left:255px;top:281px;width:880px;height:19px;background:#e3ede1"></div>
<div style="left:255px;top:300px;width:880px;height:19px;background:#fff"></div>
<div style="left:255px;top:319px;width:880px;height:19px;background:#e3ede1"></div>
<div style="left:255px;top:338px;width:880px;height:19px;background:#fff"></div>
<div style="left:255px;top:357px;width:880px;height:19px;background:#e3ede1"></div>
<div style="left:255px;top:376px;width:880px;height:19px;background:#fff"></div>
<div style="left:255px;top:395px;width:880px;height:19px;background:#e3ede1"></div>
<div style="left:255px;top:414px;width:880px;height:19px;background:#fff"></div>
<div style="left:255px;top:433px;width:880px;height:19px;background:#e3ede1"></div>
<div style="left:255px;top:452px;width:880px;height:19px;background:#fff"></div>
<div style="left:255px;top:471px;width:880px;height:19px;background:#e3ede1"></div>
<div style="left:255px;top:490px;width:880px;height:19px;background:#fff"></div>
<div style="left:255px;top:509px;width:880px;height:19px;background:#e3ede1"></div>
<div style="left:255px;top:528px;width:880px;height:19px;background:#fff"></div>
<div style="left:255px;top:547px;width:880px;height:19px;background:#e3ede1"></div>
<div style="left:255px;top:566px;width:880px;height:19px;background:#fff"></div>
<div style="left:255px;top:585px;width:880px;height:19px;background:#e3ede1"></div>
<div style="left:255px;top:604px;width:880px;height:19px;background:#fff"></div>
<div style="left:255px;top:623px;width:880px;height:19px;background:#e3ede1"></div>
<div style="left:255px;top:642px;width:880px;height:19px;background:#fff"></div>
<div style="left:255px;top:661px;width:880px;height:19px;background:#e3ede1"></div>
<div style="left:300px;top:130px;width:2px;height:17px;background:#fff"></div>
<div style="left:300px;top:148px;width:1px;height:540px;background:#98b898"></div>
<div style="left:332px;top:130px;width:2px;height:17px;background:#fff"></div>
<div style="left:332px;top:148px;width:1px;height:540px;background:#98b898"></div>
<div style="left:540px;top:130px;width:2px;height:17px;background:#fff"></div>
<div style="left:540px;top:148px;width:1px;height:540px;background:#98b898"></div>
<div style="left:804px;top:130px;width:2px;height:17px;background:#fff"></div>
<div style="left:804px;top:148px;width:1px;height:540px;background:#98b898"></div>
<div style="left:908px;top:130px;width:2px;height:17px;background:#fff"></div>
<div style="left:908px;top:148px;width:1px;height:540px;background:#98b898"></div>
<div style="left:436px;top:89px;width:652px;height:527px;background:rgba(114,176,114,0.87);border-radius:6px;box-shadow:inset 0 0 0 1px rgba(90,150,90,.55)"></div>
<div style="left:441px;top:102px;width:642px;height:1px;background:rgba(60,95,60,.42)"></div>
<div style="left:437px;top:90px;width:650px;height:24.6px;background:rgba(255,255,255,.09);border-radius:5px 5px 0 0"></div>
<div style="left:441px;top:114px;width:642px;height:497px;background:#b1c5b1"></div>
<div class="t" style="left:446px;top:93px;font-weight:bold;font-size:13.7px;transform:scaleX(.8956);transform-origin:0 0;color:#f2f8f0;line-height:16px;height:16px">Bedienerverwaltung &gt; Erfassen / Ändern [003 : Berta Becker]</div>
<div style="left:1024px;top:96px;width:28px;height:14.8px;background:linear-gradient(#e3eae8 0,#dde6e8 44%,#bccbe8 46%,#c2d0ea 100%)"></div>
<div style="left:1032px;top:99px;width:11px;height:8.8px;border:1.2px solid #5c646c;background:#f4f6f8"></div>
<div style="left:1035px;top:101.8px;width:5px;height:3px;border:1px solid #5c6474;background:#a8b8d8"></div>
<div style="left:1054px;top:96px;width:27.6px;height:14.7px;background:linear-gradient(#ecc4c4 0,#e6b4b4 44%,#dc7e7a 46%,#de8a86 100%);border:1px solid #8c5c5c;box-shadow:inset 0 0 0 1px rgba(255,225,225,.65)"></div>
<svg style="left:1063.4px;top:99.6px" width="11" height="8" viewBox="0 0 11 8"><path d="M1.4 0.8 L9.6 6.6 M9.6 0.8 L1.4 6.6" stroke="#7c5454" stroke-width="3.3" stroke-linecap="butt" opacity=".5"/><path d="M1.4 0.8 L9.6 6.6 M9.6 0.8 L1.4 6.6" stroke="#fbfbfb" stroke-width="2.5" stroke-linecap="butt"/></svg>
<div style="left:441px;top:114.6px;width:642px;height:31.4px;background:#dbead8"></div>
<svg style="left:460px;top:125.8px" width="12" height="12" viewBox="0 0 12 12"><path d="M3.4 1.3 L10.7 1.3 L10.7 8.6 L8.4 6.3 L3.2 11.5 L0.6 8.9 L5.8 3.7 Z" fill="#4878d8" stroke="#88a8ec" stroke-width="0.6"/></svg>
<div class="t" style="left:480px;top:125.6px;letter-spacing:-0.35px"><u>A</u>llgemein</div>
<div style="left:533px;top:119px;width:1px;height:23px;background:#8e9e8e"></div>
<div style="left:534px;top:119px;width:1px;height:23px;background:#f2f8f0"></div>
<svg style="left:541.4px;top:122.8px" width="16" height="18" viewBox="0 0 16 18"><path d="M4 0.8 H11 L14.6 4.4 V15.6 H4 Z" fill="url(#gDoc)" stroke="#a4b8dc" stroke-width="0.9"/><path d="M11 0.8 V4.4 H14.6" fill="#e4ecfa" stroke="#a4b8dc" stroke-width="0.7"/><path d="M1 4.4 H11.6 V7.6 H8.2 V16.4 H4.6 V7.6 H1 Z" fill="#e4e4e8" stroke="#4c4c54" stroke-width="0.9"/><path d="M2 5.4 H10.6" stroke="#fff" stroke-width="0.8"/><rect x="5.1" y="10" width="2.6" height="6" fill="#e83410"/></svg>
<div class="t" style="left:561px;top:125.6px;"><u>B</u>earbeiten</div>
<div style="left:622px;top:119px;width:1px;height:23px;background:#8e9e8e"></div>
<div style="left:623px;top:119px;width:1px;height:23px;background:#f2f8f0"></div>
<svg style="left:630px;top:122.6px" width="19" height="17" viewBox="0 0 19 17"><path d="M6.4 2.6 L12.2 1.2 L13 0.4 L17.6 0.6 L17.8 13 L7 15.4 Z" fill="url(#gFold2)" stroke="#dcae34" stroke-width="0.8" stroke-linejoin="round"/><path d="M0.6 5.4 L4 4.6 L4.8 3.8 L8.6 4 L9.2 14.6 L2.6 16.2 Z" fill="url(#gFold2)" stroke="#dcae34" stroke-width="0.8" stroke-linejoin="round"/><circle cx="13" cy="12" r="4.6" fill="url(#gBlue)" stroke="#1858c0" stroke-width="0.6"/><rect x="12.2" y="8.8" width="1.7" height="4" rx="0.5" fill="#fff"/><rect x="12.2" y="13.6" width="1.7" height="1.6" rx="0.5" fill="#fff"/></svg>
<div class="t" style="left:652px;top:125.6px;">E<u>x</u>tras</div>
<div style="left:692px;top:119px;width:1px;height:23px;background:#8e9e8e"></div>
<div style="left:693px;top:119px;width:1px;height:23px;background:#f2f8f0"></div>
<svg style="left:700.6px;top:123.6px" width="16" height="16" viewBox="0 0 16 16"><rect x="0.5" y="0.5" width="15" height="15" rx="2.4" fill="url(#gHelp)" stroke="#8caaea" stroke-width="1"/><text x="8" y="13" text-anchor="middle" font-family="Liberation Sans,sans-serif" font-weight="bold" font-size="14" fill="#fff">?</text></svg>
<div class="t" style="left:721px;top:125.6px;"><u>H</u>ilfe</div>
<svg style="left:1048.6px;top:124.6px" width="15" height="14" viewBox="0 0 15 14"><path d="M0.5 0.5 H14.5 V13.5 H2 L0.5 12 Z" fill="#4c6cc8" stroke="#3c58ac" stroke-width="0.9"/><rect x="3" y="0.6" width="9" height="5.8" fill="#fff"/><path d="M4 2.4h7M4 4.4h7" stroke="#a8b4d8" stroke-width="0.8"/><rect x="4.4" y="8.8" width="6.6" height="4.8" fill="#e8ecf8"/><rect x="5.2" y="9.6" width="2" height="3.6" fill="#4c6cc8"/></svg>
<div style="left:449px;top:177px;width:625px;height:429px;background:#f5f8f1;border:1px solid #a9c0e0"></div>
<div style="left:449px;top:157px;width:59px;height:21px;background:#f5f8f1;border:1px solid #a9c0e0;border-bottom:none"></div>
<div class="t" style="left:457px;top:162px;">Standard</div>
<div style="left:457px;top:189px;width:590px;height:108px;border:1px solid #b4bcb4"></div>
<div style="left:459px;top:182px;width:32px;height:14px;background:#f5f8f1"></div>
<div class="t" style="left:461px;top:182px;color:#4c9c4c;font-size:10.8px">Daten</div>
<div class="t" style="left:472.3px;top:201px;">Bedienernummer</div>
<div class="t" style="left:472.3px;top:222px;">Name</div>
<div class="t" style="left:472.3px;top:243px;">Bedienerart</div>
<div class="t" style="left:472.3px;top:264px;">Personalnummer</div>
<div style="left:457px;top:317px;width:590px;height:85px;border:1px solid #b4bcb4"></div>
<div style="left:459px;top:310px;width:130px;height:14px;background:#f5f8f1"></div>
<div class="t" style="left:461px;top:310px;color:#4c9c4c;font-size:10.8px">Kontakt im Unternehmen</div>
<div class="t" style="left:472.3px;top:327px;">Telefon</div>
<div class="t" style="left:472.3px;top:348px;">E-Mail Kontonummer</div>
<div class="t" style="left:472.3px;top:369px;">E-Mail Absender</div>
<div style="left:457px;top:422px;width:450px;height:148px;border:1px solid #b4bcb4"></div>
<div style="left:459px;top:415px;width:110px;height:14px;background:#f5f8f1"></div>
<div class="t" style="left:461px;top:415px;color:#4c9c4c;font-size:10.8px">Info / Einstellungen</div>
<div class="t" style="left:472.3px;top:432px;">Berechtigung</div>
<div class="t" style="left:472.3px;top:453px;">Standardarbeitsgruppe</div>
<div class="t" style="left:472.3px;top:474px;">Belegselektion</div>
<div class="t" style="left:472.3px;top:495px;">Vertreternummer</div>
<div class="t" style="left:472.3px;top:516px;">Adressnummer</div>
<div class="t" style="left:472.3px;top:537px;">Filiale</div>
<div style="left:917px;top:422px;width:130px;height:148px;border:1px solid #b4bcb4"></div>
<div style="left:920px;top:415px;width:20px;height:14px;background:#f5f8f1"></div>
<div class="t" style="left:921px;top:415px;color:#4c9c4c;font-size:10.8px">Bild</div>
<div style="left:880px;top:219px;width:35px;height:18px;border:1px solid #7ab87a;background:#fff"></div>
<div style="left:880px;top:240px;width:155px;height:18px;border:1px solid #7ab87a;background:#fff"></div>
<div style="left:1018px;top:240px;width:17px;height:18px;border:1px solid #7ab87a;background:#d6e7d4"></div>
<svg style="left:1022px;top:246px" width="9" height="6" viewBox="0 0 9 6"><path d="M0.5 0.5 H8.5 L4.5 5Z" fill="#5aa05a"/></svg>
<div style="left:880px;top:261px;width:155px;height:18px;border:1px solid #7ab87a;background:#fff"></div>
<div style="left:1018px;top:261px;width:17px;height:18px;border:1px solid #7ab87a;background:#d6e7d4"></div>
<svg style="left:1022.5px;top:265px" width="8" height="10.6" viewBox="0 0 9 12"><path d="M4.5 0.5 L8.5 4.5 H0.5Z M0 5.6h9v0.9h-9z M0.5 7.5 H8.5 L4.5 11.5Z" fill="#5aa05a"/></svg>
<div style="left:880px;top:345px;width:155px;height:18px;border:1px solid #7ab87a;background:#fff"></div>
<div style="left:1018px;top:345px;width:17px;height:18px;border:1px solid #7ab87a;background:#d6e7d4"></div>
<svg style="left:1022.5px;top:349px" width="8" height="10.6" viewBox="0 0 9 12"><path d="M4.5 0.5 L8.5 4.5 H0.5Z M0 5.6h9v0.9h-9z M0.5 7.5 H8.5 L4.5 11.5Z" fill="#5aa05a"/></svg>
<div style="left:880px;top:366px;width:35px;height:18px;border:1px solid #7ab87a;background:#fff"></div>
<svg style="left:932px;top:438px" width="105" height="116" viewBox="0 0 105 116">
<defs><filter id="bl" x="-10%" y="-10%" width="120%" height="120%"><feGaussianBlur stdDeviation="1"/></filter>
<filter id="bl2" x="-30%" y="-30%" width="160%" height="160%"><feGaussianBlur stdDeviation="5"/></filter>
<linearGradient id="pbg" x1="0" x2="1" y1="0" y2="0.3"><stop offset="0" stop-color="#d3cbcf"/><stop offset="0.5" stop-color="#e2dcdf"/><stop offset="1" stop-color="#ece7e8"/></linearGradient>
<linearGradient id="hg" x1="0" x2="1" y1="0" y2="0.6"><stop offset="0" stop-color="#ac7a46"/><stop offset="0.45" stop-color="#905e32"/><stop offset="1" stop-color="#744626"/></linearGradient>
<clipPath id="pc"><rect width="105" height="116"/></clipPath></defs>
<rect width="105" height="116" fill="url(#pbg)"/>
<g clip-path="url(#pc)">
<ellipse cx="16" cy="84" rx="16" ry="16" fill="#f6f2f2" filter="url(#bl2)"/>
<ellipse cx="98" cy="70" rx="10" ry="22" fill="#f2ecec" filter="url(#bl2)"/>
<g filter="url(#bl)">
<path d="M37 72 L36.5 95 L29 117 L64 117 L71 94 L76 74 Z" fill="#d89c80"/>
<path d="M38 82 C46 92 62 90 72 78 L70 92 C60 99 46 98 37 92Z" fill="#bf8468"/>
<path d="M-2 104.5 C10 101 26 98.5 36.6 95 C36 103 33 110 29.5 118 L-2 118Z" fill="#1b1c27"/>
<path d="M76.7 78 C84 90 95 97 107 102.5 L107 118 L62.5 118 C68 106 72 92 73.5 82Z" fill="#1b1c27"/>
<path d="M70 96 L76 80 L79 84 L68 116 Z" fill="#2a2b38"/>
<path d="M19.5 43 C16.5 24 32 6 56 5.4 C80 5 97.5 22 95.5 46 C95 58 90 70 81 78 C80.5 68 80 58 78 50 C76 40 72 32 64 27 C52 27 38 31 28 40 C26 43 24.5 46 24 50 Z" fill="url(#hg)"/>
<path d="M25 50 C24 38 30 27 46 23.5 C62 21.5 76 30 78 46 C80 60 74 76 62 85 C56 89.5 46 90 40 84.5 C32 77 26 62 25 50Z" fill="#e6b092"/>
<path d="M28 58 C31 74 40 86 48 87 C58 88 68 78 74 64 C68 74 58 81 49 81 C40 80 33 71 28 58Z" fill="#d79a7e"/>
<ellipse cx="48" cy="34" rx="14" ry="6" fill="#efc0a4"/>
<path d="M22 47 C20 32 30 18 50 17 C64 16.5 76 24 80 40 C73 32 64 27.5 56 27 C44 27 32 33 25 49Z" fill="#9a6434"/>
<path d="M23 34 C30 14 52 8 70 14 C56 13 40 19 31 33 C29 36 27 40 25 44Z" fill="#c4945a"/>
<path d="M40 14 C50 9 62 10 72 16 C62 14 50 15 42 19Z" fill="#b88450"/>
<path d="M70 12 C90 18 98 36 93.5 56 C91 68 85 75 81 78 C82.5 62 81 46 75 32 C73 24 72 18 70 12Z" fill="#7c4a28" fill-opacity="0.75"/>
<path d="M77 50 C80 52 81 60 78 66 C77 60 77 56 77 50Z" fill="#d08c70"/>
<path d="M21 43.5 L34 44 L50 46 L66 46.5 L80 48.5 L80 51.5 L66 50 L50 49.5 L34 47.5 L21 46.5Z" fill="#3c2418"/>
<path d="M25 46 C25 56 28 60 34 60 C40 60 43 55 43 48 Z" fill="#f4d8c4" fill-opacity="0.5" stroke="#8a6048" stroke-width="1.2"/>
<path d="M52 48 C52 58 56 62 64 62 C71 62 75 57 76 50 Z" fill="#f4d8c4" fill-opacity="0.5" stroke="#8a6048" stroke-width="1.2"/>
<ellipse cx="34.5" cy="51.5" rx="3" ry="1.3" fill="#5c4032"/><ellipse cx="63.5" cy="53.5" rx="3.2" ry="1.3" fill="#5c4032"/>
<path d="M46 57 C45 62 45 65 48.5 66" stroke="#c98a6c" stroke-width="1.3" fill="none"/>
<path d="M37 69.5 C43 77 54 78 58.5 70.5 C52 73 44 72.5 37 69.5Z" fill="#fcf4ee" stroke="#b8685a" stroke-width="1.1"/>
</g></g></svg>
<div style="left:537px;top:145px;width:374px;height:503px;background:#fcfcfa;border:1px solid #a2a2a2;box-shadow:1px 1px 1px rgba(0,0,0,.15)"></div>
<div style="left:538px;top:146px;width:26px;height:501px;background:#dbe9d8"></div>
<div class="m mg" style="left:575px;top:151px">Allgemeine bedienerkontenabhängige Berechtigungen</div>
<div style="left:540.5px;top:170.3px;width:367.8px;height:19.6px;background:#76b276"></div>
<div class="m" style="left:575px;top:173px;color:#fff"><u>L</u>izenzabhängige Modulberechtigung</div>
<div class="m mg" style="left:575px;top:194px"><u>M</u>andantenzuordnung</div>
<div class="m" style="left:575px;top:215px">Standardarbeitsgruppe und Arbeitsgruppenzuordnung</div>
<div class="m" style="left:575px;top:236px">Abteilung/Beleg<u>s</u>elektion</div>
<div style="left:574px;top:254px;width:334px;height:1px;background:#a8a8a8"></div>
<div style="left:574px;top:255px;width:334px;height:1px;background:#fff"></div>
<div class="m mg" style="left:575px;top:259px">Personalspezifische Optionen/Parameter und Zusatzinformationen</div>
<div class="m" style="left:575px;top:280px"><u>V</u>erweise auf Vertreter-/Adressnummer und Filiale</div>
<div class="m" style="left:575px;top:301px">Mehr <u>p</u>ersonalspezifische Optionen/Parameter</div>
<div class="m" style="left:874px;top:301px">(F11)</div>
<div style="left:574px;top:319px;width:334px;height:1px;background:#a8a8a8"></div>
<div style="left:574px;top:320px;width:334px;height:1px;background:#fff"></div>
<div class="m mg" style="left:575px;top:324px">Konfiguration</div>
<div class="m" style="left:575px;top:345px">Einstellungen verwenden von...</div>
<div style="left:574px;top:363px;width:334px;height:1px;background:#a8a8a8"></div>
<div style="left:574px;top:364px;width:334px;height:1px;background:#fff"></div>
<div class="m mg" style="left:575px;top:368px">Kasse</div>
<div class="m" style="left:575px;top:389px">La<u>y</u>out</div>
<div class="m" style="left:575px;top:410px">P<u>r</u>eisänderung</div>
<div class="m" style="left:575px;top:431px"><u>K</u>assieren</div>
<div style="left:574px;top:449px;width:334px;height:1px;background:#a8a8a8"></div>
<div style="left:574px;top:450px;width:334px;height:1px;background:#fff"></div>
<div class="m mg" style="left:575px;top:453px">Extras</div>
<div class="m" style="left:575px;top:475px">B<u>e</u>merkungen</div>
<div style="left:574px;top:493px;width:334px;height:1px;background:#a8a8a8"></div>
<div style="left:574px;top:494px;width:334px;height:1px;background:#fff"></div>
<div class="m mg" style="left:575px;top:498px">Bedienerkonto für</div>
<div class="m" style="left:575px;top:519px"><u>B</u>üroWARE</div>
<div class="m" style="left:575px;top:540px"><u>W</u>EBWARE</div>
<div style="left:574px;top:557px;width:334px;height:1px;background:#a8a8a8"></div>
<div style="left:574px;top:558px;width:334px;height:1px;background:#fff"></div>
<div class="m" style="left:575px;top:563px">Als Vorlage für Public-User (Öffentliche Vorlage) verwenden</div>
<div style="left:574px;top:580px;width:334px;height:1px;background:#a8a8a8"></div>
<div style="left:574px;top:581px;width:334px;height:1px;background:#fff"></div>
<div class="m mg" style="left:575px;top:586px">Bediener</div>
<div class="m" style="left:575px;top:607px"><u>Z</u>ugriff nur lesend</div>
<div class="m" style="left:575px;top:628px"><u>A</u>ktiv</div>
<svg style="left:545px;top:521px" width="13" height="10" viewBox="0 0 13 10"><path d="M0.8 4.8 L2.6 3.8 L4.8 6.2 L11.8 0.6 L12.6 1.4 L5 9.4 Z" fill="#2aa82a"/></svg>
<svg style="left:545px;top:630px" width="13" height="10" viewBox="0 0 13 10"><path d="M0.8 4.8 L2.6 3.8 L4.8 6.2 L11.8 0.6 L12.6 1.4 L5 9.4 Z" fill="#2aa82a"/></svg>
<svg style="left:543.2px;top:172.3px" width="14" height="14" viewBox="0 0 14 14"><rect x="0.4" y="0.4" width="13.2" height="13.2" rx="1.6" fill="#5c5cb4" stroke="#b8b8e4" stroke-width="0.8"/><rect x="2" y="2" width="10" height="9.4" fill="#ececf8"/><rect x="2" y="8.4" width="10" height="3" fill="#c4c4e4"/><path d="M2.4 6.6 L4.4 5 L6 7 L11.2 1.8 L12.6 3.4 L6.2 11 Z" fill="#24b424" stroke="#189818" stroke-width="0.4"/></svg>
<svg style="left:543px;top:192.6px" width="16" height="16" viewBox="0 0 16 16"><path d="M10.6 0.4 C13 0.4 13.6 2.6 12.8 4.2 C12.4 5 12.6 5.6 13.4 6.4 C15 8 15.6 11 15.6 15.6 H6.6 C6.6 11 7 8 8.4 6.4 C9 5.6 9 5 8.6 4.2 C7.8 2.6 8.4 0.4 10.6 0.4Z" fill="#6088bc"/><path d="M4.6 1.6 C6.8 1.6 7.4 3.6 6.6 5 C6.2 5.8 6.4 6.4 7.2 7.2 C8.6 8.6 9 11.4 9 15.6 H0.4 C0.4 11.4 0.8 8.6 2.2 7.2 C3 6.4 3 5.8 2.6 5 C1.8 3.6 2.4 1.6 4.6 1.6Z" fill="#70a870"/><path d="M0 2h16M0 4h16M0 6h16M0 8h16M0 10h16M0 12h16M0 14h16" stroke="#dbe9d8" stroke-width="0.6" opacity=".55"/></svg>
<svg style="left:542.6px;top:214px" width="17" height="16" viewBox="0 0 17 16"><circle cx="5" cy="4.4" r="3.2" fill="#e8e8ec" stroke="#9898a8" stroke-width="0.5"/><ellipse cx="5.4" cy="5.4" rx="2" ry="2.4" fill="#f0c898"/><path d="M0.6 14.4 C0.4 8.4 9 8.4 9 14.4Z" fill="#2c5ca4" stroke="#183468" stroke-width="0.5"/><circle cx="12" cy="4" r="3.3" fill="#ecc844" stroke="#a88420" stroke-width="0.5"/><ellipse cx="11.8" cy="5" rx="2" ry="2.4" fill="#f0c898"/><path d="M8 14.4 C8 8.2 16.6 8.2 16.4 14.4Z" fill="#2c5ca4" stroke="#183468" stroke-width="0.5"/><circle cx="8.6" cy="7.2" r="3" fill="#e4b838" stroke="#a07c1c" stroke-width="0.5"/><ellipse cx="8.6" cy="8.2" rx="1.9" ry="2.2" fill="#f0c898"/><path d="M4 15.8 C4 10.6 13.2 10.6 13.2 15.8Z" fill="#244c94" stroke="#142c60" stroke-width="0.5"/></svg>
</div>
</body></html>
